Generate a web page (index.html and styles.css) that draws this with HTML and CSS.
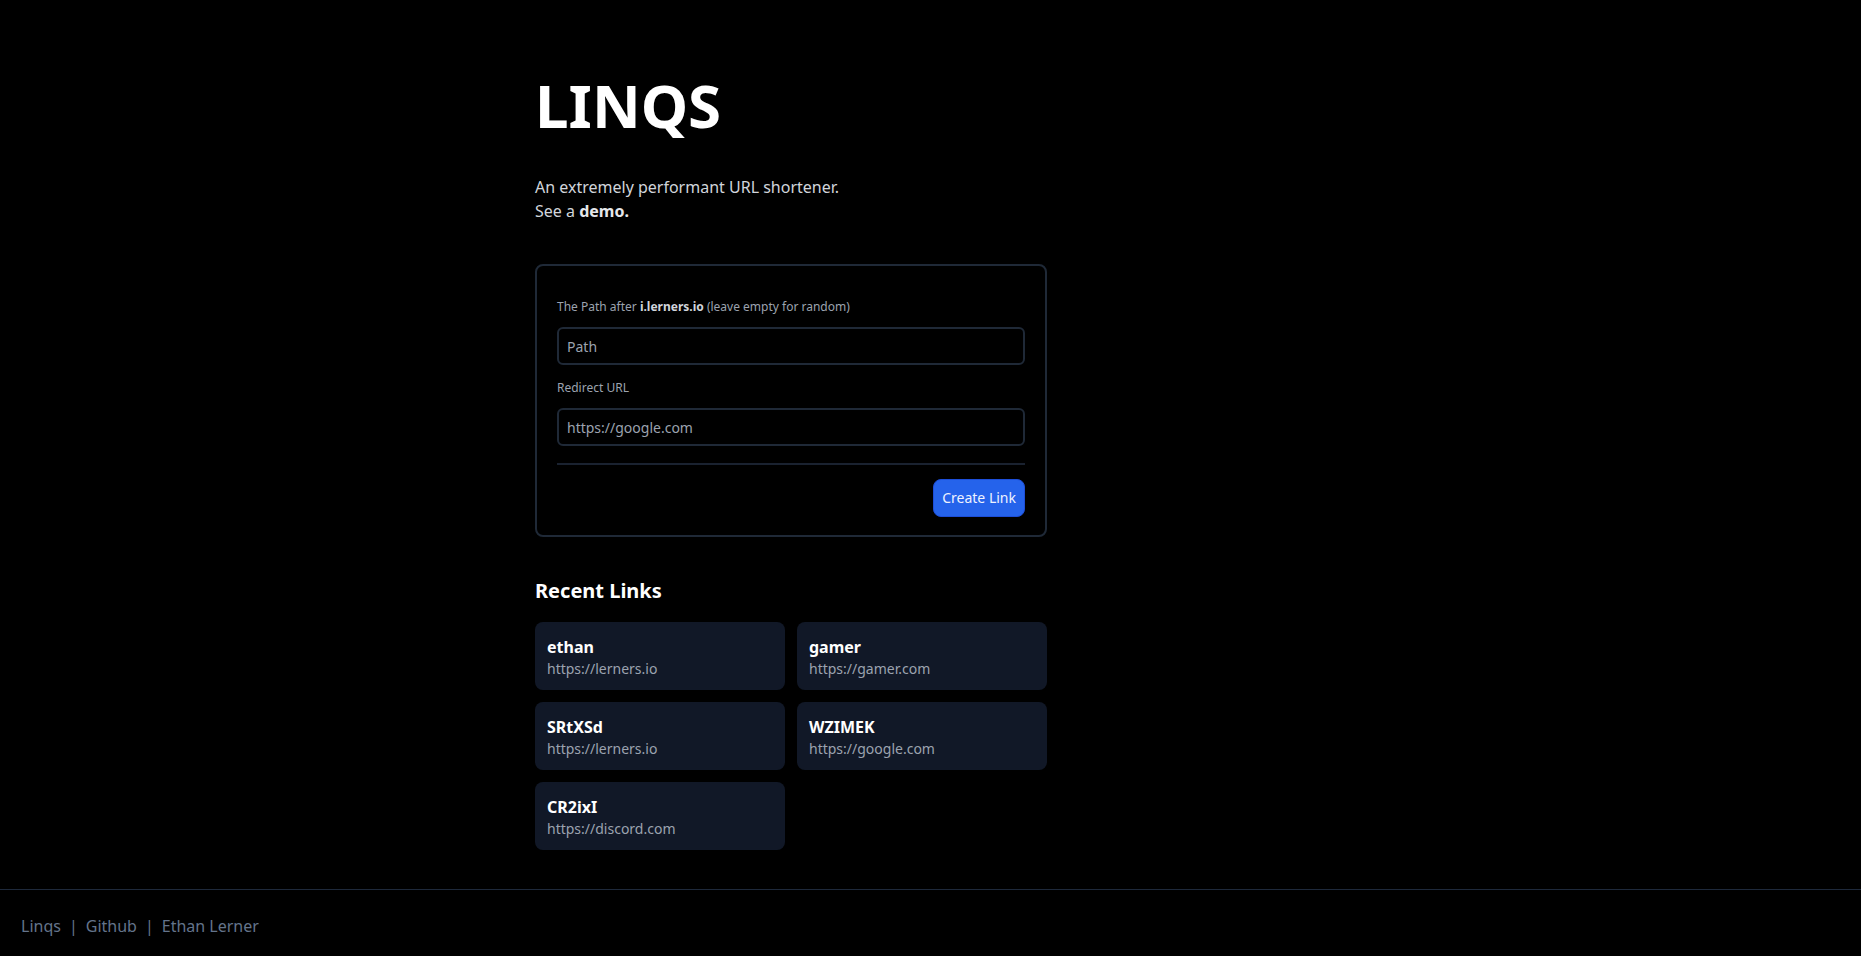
FILE: index.html
```html
<!DOCTYPE html>
<html lang="en">
<head>
<meta charset="utf-8">
<title>Linqs</title>
<link rel="stylesheet" href="styles.css">
</head>
<body>
<main class="container">
  <div class="content">
    <h1 class="title">LINQS</h1>
    <p class="subtitle">An extremely performant URL shortener.<br>See a <a class="demo" href="#">demo.</a></p>

    <form class="create-card">
      <div class="field">
        <label class="field-label" for="path">The Path after <b>i.lerners.io</b> (leave empty for random)</label>
        <input class="field-input" id="path" type="text" placeholder="Path">
      </div>
      <div class="field">
        <label class="field-label" for="url">Redirect URL</label>
        <input class="field-input" id="url" type="text" placeholder="https://google.com">
      </div>
      <div class="actions">
        <button class="btn-primary" type="button">Create Link</button>
      </div>
    </form>

    <h2 class="section-title">Recent Links</h2>
    <div class="links-grid">
      <div class="link-card"><div class="link-name">ethan</div><div class="link-url">https://lerners.io</div></div>
      <div class="link-card"><div class="link-name">gamer</div><div class="link-url">https://gamer.com</div></div>
      <div class="link-card"><div class="link-name">SRtXSd</div><div class="link-url">https://lerners.io</div></div>
      <div class="link-card"><div class="link-name">WZIMEK</div><div class="link-url">https://google.com</div></div>
      <div class="link-card"><div class="link-name">CR2ixI</div><div class="link-url">https://discord.com</div></div>
    </div>
  </div>
</main>
<footer class="footer">
  <a href="#">Linqs</a><span class="sep">|</span><a href="#">Github</a><span class="sep">|</span><a href="#">Ethan Lerner</a>
</footer>
</body>
</html>
```

FILE: styles.css
```css
* { box-sizing: border-box; }
html, body { margin: 0; padding: 0; background: #000; }
body {
  font-family: "Noto Sans", "Open Sans", sans-serif;
  color: #e5e7eb;
  font-size: 16px;
  line-height: 24px;
}
.container {
  max-width: 791px;
  margin: 0 auto;
  padding-top: 75px;
  padding-bottom: 39px;
}
.content { width: 512px; }
.title {
  margin: 0;
  font-size: 60px;
  line-height: 60px;
  font-weight: 700;
  color: #fff;
}
.subtitle {
  margin: 40px 0 0;
  color: #d1d5db;
  font-size: 16px;
  line-height: 24px;
}
.demo { color: #e5e7eb; font-weight: 700; text-decoration: none; }

.create-card {
  margin-top: 41px;
  border: 2px solid #1f2937;
  border-radius: 8px;
  padding: 33px 20px 18px;
  display: flex;
  flex-direction: column;
}
.field { display: flex; flex-direction: column; }
.field + .field { margin-top: 15px; }
.field-label {
  font-size: 12px;
  line-height: 16px;
  color: #9ca3af;
  margin-bottom: 12px;
}
.field-label b { color: #d1d5db; font-weight: 700; }
.field-input {
  height: 38px;
  border: 2px solid #1f2937;
  border-radius: 6px;
  background: #000;
  color: #e5e7eb;
  font-family: inherit;
  font-size: 14px;
  padding: 0 8px;
  outline: none;
}
.field-input::placeholder { color: #9ca3af; }
.actions {
  margin-top: 17px;
  border-top: 2px solid #1a2230;
  padding-top: 14px;
  display: flex;
  justify-content: flex-end;
}
.btn-primary {
  background: #2563eb;
  color: #eef2ff;
  border: 1px solid #1d4ed8;
  border-radius: 8px;
  font-family: inherit;
  font-size: 14px;
  line-height: 20px;
  padding: 8px 8px;
}

.section-title {
  margin: 40px 0 17px;
  font-size: 20px;
  line-height: 28px;
  font-weight: 700;
  color: #fff;
}
.links-grid {
  display: grid;
  grid-template-columns: 1fr 1fr;
  gap: 12px 12px;
}
.link-card {
  background: #111827;
  border-radius: 8px;
  padding: 13px 12px 11px;
}
.link-name { font-weight: 700; color: #fff; font-size: 16px; line-height: 24px; }
.link-url { color: #9ca3af; font-size: 14px; line-height: 20px; }

.footer {
  border-top: 1px solid #1e293b;
  padding: 24px 21px;
  color: #64748b;
  font-size: 16px;
  line-height: 24px;
}
.footer a { color: #64748b; text-decoration: none; }
.sep { margin: 0 8px; }
```
